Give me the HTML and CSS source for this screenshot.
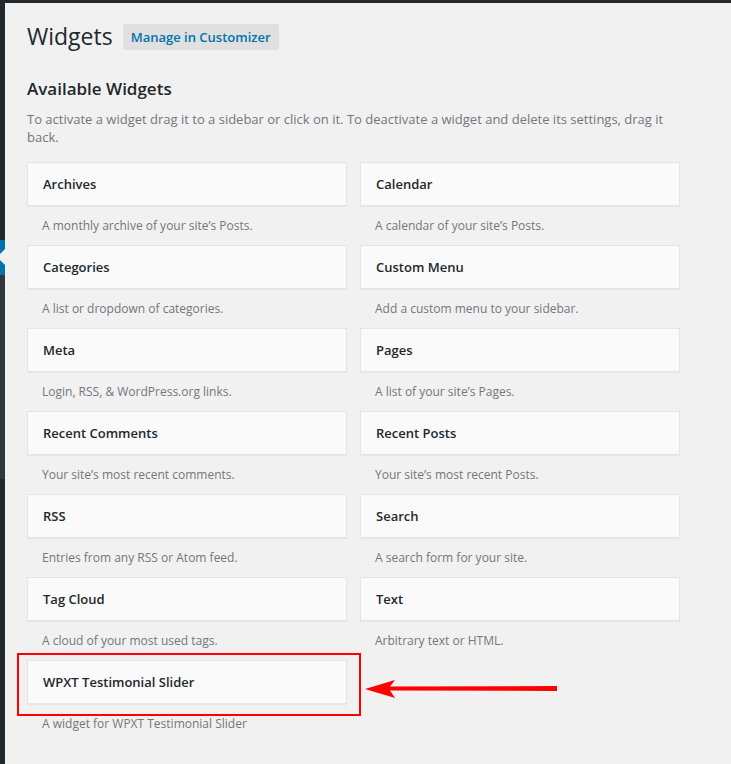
FILE: index.html
```html
<!DOCTYPE html>
<html>
<head>
<meta charset="utf-8">
<link rel="stylesheet" href="styles.css">
</head>
<body>
<div class="topbar"></div>
<div class="layout">
  <div class="adminmenu">
    <div class="m-dark1"></div>
    <div class="m-current">
      <svg class="m-arrow" width="5" height="35" viewBox="0 0 5 35"><polygon points="-3,17 5,9 5,25" fill="#f1f1f1"/></svg>
    </div>
    <div class="m-sub"></div>
    <div class="m-dark2"></div>
  </div>
  <div class="content">
    <div class="header">
      <h1 class="page-title">Widgets</h1>
      <a class="title-action">Manage in Customizer</a>
    </div>
    <h2 class="section-title">Available Widgets</h2>
    <p class="section-desc">To activate a widget drag it to a sidebar or click on it. To deactivate a widget and delete its settings, drag it back.</p>
    <div class="widget-grid">
      <div class="widget"><div class="widget-top">Archives</div><div class="widget-desc">A monthly archive of your site’s Posts.</div></div>
      <div class="widget"><div class="widget-top">Calendar</div><div class="widget-desc">A calendar of your site’s Posts.</div></div>
      <div class="widget"><div class="widget-top">Categories</div><div class="widget-desc">A list or dropdown of categories.</div></div>
      <div class="widget"><div class="widget-top">Custom Menu</div><div class="widget-desc">Add a custom menu to your sidebar.</div></div>
      <div class="widget"><div class="widget-top">Meta</div><div class="widget-desc">Login, RSS, &amp; WordPress.org links.</div></div>
      <div class="widget"><div class="widget-top">Pages</div><div class="widget-desc">A list of your site’s Pages.</div></div>
      <div class="widget"><div class="widget-top">Recent Comments</div><div class="widget-desc">Your site’s most recent comments.</div></div>
      <div class="widget"><div class="widget-top">Recent Posts</div><div class="widget-desc">Your site’s most recent Posts.</div></div>
      <div class="widget"><div class="widget-top">RSS</div><div class="widget-desc">Entries from any RSS or Atom feed.</div></div>
      <div class="widget"><div class="widget-top">Search</div><div class="widget-desc">A search form for your site.</div></div>
      <div class="widget"><div class="widget-top">Tag Cloud</div><div class="widget-desc">A cloud of your most used tags.</div></div>
      <div class="widget"><div class="widget-top">Text</div><div class="widget-desc">Arbitrary text or HTML.</div></div>
      <div class="widget"><div class="widget-top">WPXT Testimonial Slider</div><div class="widget-desc">A widget for WPXT Testimonial Slider</div></div>
    </div>
  </div>
</div>
<div class="highlight-box"></div>
<svg class="highlight-arrow" width="200" height="24" viewBox="0 0 200 24">
  <polygon points="0,10 30,1 25,7.5 192,7 192,12 25,11.5 30,19" fill="#ff0000"/>
</svg>
</body>
</html>
```
FILE: styles.css
```css
html, body {
  margin: 0;
  padding: 0;
}
body {
  background: #f1f1f1;
  font-family: "Open Sans", "Liberation Sans", sans-serif;
  color: #444;
  font-size: 13px;
  position: relative;
  min-height: 764px;
  overflow: hidden;
}
.topbar {
  height: 3px;
  background: #23282d;
}
.layout {
  display: flex;
  min-height: 761px;
}
.adminmenu {
  width: 5px;
  flex: 0 0 5px;
  display: flex;
  flex-direction: column;
}
.m-dark1 {
  height: 237px;
  background: #23282d;
}
.m-current {
  height: 35px;
  background: #0073aa;
}
.m-arrow {
  display: block;
}
.m-sub {
  height: 204px;
  background: #32373c;
}
.m-dark2 {
  flex: 1;
  background: #23282d;
}
.content {
  padding-left: 22px;
  width: 653px;
}
.header {
  display: flex;
  align-items: center;
  gap: 10px;
  margin-top: 21px;
  height: 26px;
}
.page-title {
  margin: 0;
  font-size: 23px;
  font-weight: 400;
  line-height: 26px;
  color: #23282d;
  position: relative;
  top: -1px;
}
.title-action {
  display: block;
  background: #e0e0e0;
  color: #0073aa;
  font-size: 13px;
  font-weight: 600;
  line-height: 26px;
  height: 26px;
  padding: 0 8px;
  border-radius: 2px;
}
.section-title {
  margin: 29px 0 0;
  font-size: 17px;
  font-weight: 600;
  line-height: 20px;
  color: #23282d;
}
.section-desc {
  margin: 11px 0 0;
  font-size: 13px;
  line-height: 18px;
  color: #72777c;
}
.widget-grid {
  margin-top: 16px;
  display: grid;
  grid-template-columns: 320px 320px;
  column-gap: 13px;
}
.widget-top {
  height: 42px;
  box-sizing: content-box;
  background: #fafafa;
  border: 1px solid #e5e5e5;
  box-shadow: 0 1px 1px rgba(0, 0, 0, 0.04);
  padding: 0 15px;
  font-size: 13px;
  font-weight: 600;
  line-height: 42px;
  color: #23282d;
}
.widget-desc {
  padding: 10px 15px 9px;
  font-size: 12px;
  line-height: 20px;
  color: #72777c;
}
.highlight-box {
  position: absolute;
  left: 17px;
  top: 653px;
  width: 340px;
  height: 59px;
  border: 2px solid #ff0000;
}
.highlight-arrow {
  position: absolute;
  left: 365px;
  top: 679px;
}
```
